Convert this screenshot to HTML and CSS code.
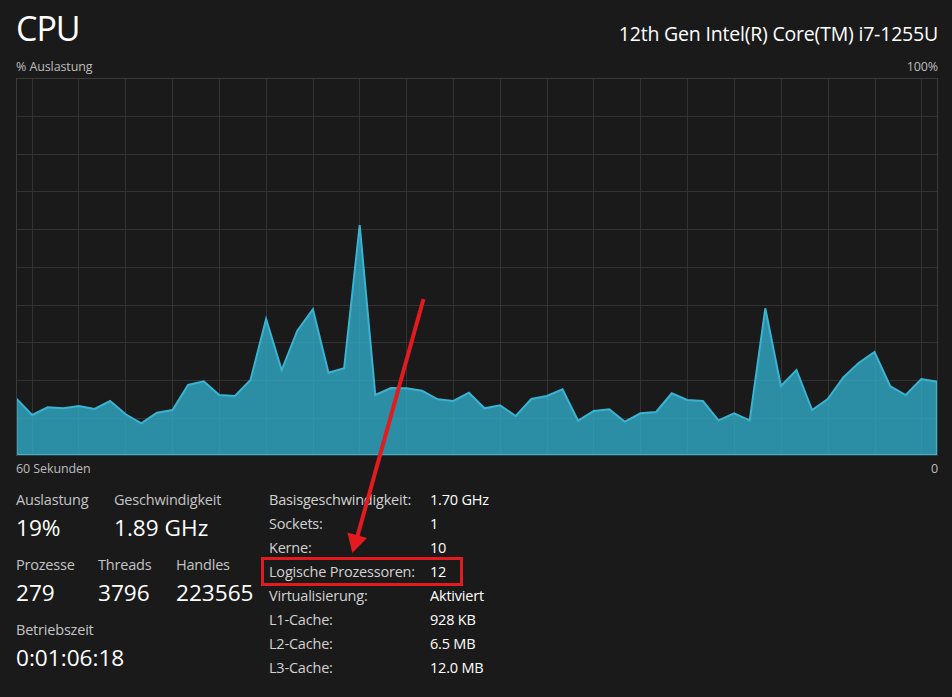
FILE: index.html
```html
<!DOCTYPE html>
<html lang="de">
<head>
<meta charset="utf-8">
<title>CPU</title>
<link rel="stylesheet" href="styles.css">
</head>
<body>
<div class="page">
  <header class="header">
    <h1 class="title">CPU</h1>
    <div class="model">12th Gen Intel(R) Core(TM) i7-1255U</div>
  </header>
  <div class="axis axis-top">
    <span>% Auslastung</span>
    <span>100%</span>
  </div>
  <svg class="chart" width="922" height="378" viewBox="16 78 922 378">
    <g class="grid">
      <line x1="16" y1="116.5" x2="938" y2="116.5"/>
      <line x1="16" y1="154.5" x2="938" y2="154.5"/>
      <line x1="16" y1="191.5" x2="938" y2="191.5"/>
      <line x1="16" y1="229.5" x2="938" y2="229.5"/>
      <line x1="16" y1="267.5" x2="938" y2="267.5"/>
      <line x1="16" y1="305.5" x2="938" y2="305.5"/>
      <line x1="16" y1="342.5" x2="938" y2="342.5"/>
      <line x1="16" y1="380.5" x2="938" y2="380.5"/>
      <line x1="16" y1="418.5" x2="938" y2="418.5"/>
      <line x1="32.5" y1="78" x2="32.5" y2="456"/>
      <line x1="78.5" y1="78" x2="78.5" y2="456"/>
      <line x1="125.5" y1="78" x2="125.5" y2="456"/>
      <line x1="172.5" y1="78" x2="172.5" y2="456"/>
      <line x1="219.5" y1="78" x2="219.5" y2="456"/>
      <line x1="266.5" y1="78" x2="266.5" y2="456"/>
      <line x1="313.5" y1="78" x2="313.5" y2="456"/>
      <line x1="359.5" y1="78" x2="359.5" y2="456"/>
      <line x1="406.5" y1="78" x2="406.5" y2="456"/>
      <line x1="453.5" y1="78" x2="453.5" y2="456"/>
      <line x1="500.5" y1="78" x2="500.5" y2="456"/>
      <line x1="547.5" y1="78" x2="547.5" y2="456"/>
      <line x1="593.5" y1="78" x2="593.5" y2="456"/>
      <line x1="640.5" y1="78" x2="640.5" y2="456"/>
      <line x1="687.5" y1="78" x2="687.5" y2="456"/>
      <line x1="734.5" y1="78" x2="734.5" y2="456"/>
      <line x1="781.5" y1="78" x2="781.5" y2="456"/>
      <line x1="828.5" y1="78" x2="828.5" y2="456"/>
      <line x1="875.5" y1="78" x2="875.5" y2="456"/>
      <line x1="921.5" y1="78" x2="921.5" y2="456"/>
    </g>
    <polygon class="area" points="16.5,455 16.5,398.7 32.1,415 47.7,407.3 63.3,408.3 78.9,406 94.5,409 110.1,401 125.7,414.3 141.3,423.3 156.9,412.7 172.5,410 188.1,385 203.7,381.3 219.3,395 234.9,396 250.5,380 266.1,319 281.7,370 297.3,330.7 312.9,309.3 328.5,372.7 344.1,368.3 359.7,225 375.3,395 390.9,388 406.5,388.3 422.1,390.7 437.7,399.3 453.3,401 468.9,392.7 484.5,408.3 500.1,405.3 515.7,416 531.3,399 546.9,396 562.5,389.3 578.1,420.7 593.7,411 609.3,409.3 624.9,421.7 640.5,413.3 656.1,412 671.7,393.3 687.3,400 702.9,401 718.5,420.3 734.1,413.3 749.7,420.3 765.3,308.3 780.9,386 796.5,370 812.1,410 827.7,399 843.3,377.3 858.9,362.7 874.5,352 890.1,386 905.7,395 921.3,379 936.9,381.7 936.9,455"/>
    <rect class="frame" x="16.5" y="78.5" width="921" height="377"/>
  </svg>
  <div class="axis axis-bottom">
    <span>60 Sekunden</span>
    <span>0</span>
  </div>
  <section class="stats">
    <div class="live">
      <div class="group">
        <div class="stat w-util"><div class="label">Auslastung</div><div class="value">19%</div></div>
        <div class="stat"><div class="label">Geschwindigkeit</div><div class="value">1.89 GHz</div></div>
      </div>
      <div class="group">
        <div class="stat w-proc"><div class="label">Prozesse</div><div class="value">279</div></div>
        <div class="stat w-thr"><div class="label">Threads</div><div class="value">3796</div></div>
        <div class="stat"><div class="label">Handles</div><div class="value">223565</div></div>
      </div>
      <div class="group">
        <div class="stat"><div class="label">Betriebszeit</div><div class="value">0:01:06:18</div></div>
      </div>
    </div>
    <dl class="specs">
      <dt>Basisgeschwindigkeit:</dt><dd>1.70 GHz</dd>
      <dt>Sockets:</dt><dd>1</dd>
      <dt>Kerne:</dt><dd>10</dd>
      <dt>Logische Prozessoren:</dt><dd>12</dd>
      <dt>Virtualisierung:</dt><dd>Aktiviert</dd>
      <dt>L1-Cache:</dt><dd>928 KB</dd>
      <dt>L2-Cache:</dt><dd>6.5 MB</dd>
      <dt>L3-Cache:</dt><dd>12.0 MB</dd>
    </dl>
  </section>
</div>
<div class="highlight"></div>
<svg class="arrow" width="952" height="697" viewBox="0 0 952 697">
  <line x1="423.5" y1="299" x2="357.5" y2="536" class="arrow-line"/>
  <polygon points="352.3,553 347.4,532.4 367,538" class="arrow-head"/>
</svg>
</body>
</html>
```
FILE: styles.css
```css
* { box-sizing: border-box; }
html, body { margin: 0; padding: 0; }
body {
  background: #1a1a1a;
  color: #ffffff;
  font-family: "Open Sans", "Noto Sans", sans-serif;
  width: 952px;
  height: 697px;
  overflow: hidden;
  position: relative;
}
.page {
  padding: 0 14px 0 16px;
}
.header {
  display: flex;
  justify-content: space-between;
  align-items: baseline;
  height: 49px;
  padding-top: 9px;
}
.title {
  margin: 0;
  font-weight: 400;
  font-size: 34px;
  letter-spacing: -1px;
  line-height: 39px;
  color: #ffffff;
}
.model {
  font-size: 19.5px;
  letter-spacing: -0.2px;
  line-height: 26px;
  color: #ffffff;
}
.axis {
  display: flex;
  justify-content: space-between;
  font-size: 12.5px;
  letter-spacing: -0.1px;
  line-height: 16px;
  color: #bdbdbd;
}
.axis-top { margin-top: 10px; }
.axis-bottom { margin-top: 5px; }
.chart {
  display: block;
  margin-top: 3px;
}
.grid line {
  stroke: #333333;
  stroke-width: 1;
}
.area {
  fill: #2fa8c5;
  fill-opacity: 0.82;
  stroke: #3ab3d2;
  stroke-width: 2;
  stroke-linejoin: miter;
}
.frame {
  fill: none;
  stroke: #3a3a3a;
  stroke-width: 1;
}
.stats {
  display: flex;
  align-items: flex-start;
  margin-top: 11px;
}
.live {
  width: 253px;
  padding-top: 2px;
}
.group {
  display: flex;
  margin-bottom: 10px;
}
.w-util { width: 98px; }
.w-proc { width: 82px; }
.w-thr { width: 78px; }
.label {
  font-size: 14.5px;
  letter-spacing: -0.2px;
  line-height: 20px;
  color: #c4c4c4;
}
.value {
  font-size: 22.6px;
  line-height: 35px;
  color: #ffffff;
  white-space: nowrap;
}
.specs {
  margin: 0;
  display: grid;
  grid-template-columns: 161px auto;
  grid-auto-rows: 24px;
  font-size: 14.5px;
  letter-spacing: -0.2px;
  line-height: 24px;
}
.specs dt {
  color: #d2d2d2;
  white-space: nowrap;
}
.specs dd {
  margin: 0;
  color: #ffffff;
  white-space: nowrap;
}
.highlight {
  position: absolute;
  left: 261px;
  top: 557px;
  width: 202px;
  height: 29px;
  border: 3px solid #e31b1f;
}
.arrow {
  position: absolute;
  left: 0;
  top: 0;
  pointer-events: none;
}
.arrow-line {
  stroke: #e31b1f;
  stroke-width: 4;
}
.arrow-head {
  fill: #e31b1f;
}
```
